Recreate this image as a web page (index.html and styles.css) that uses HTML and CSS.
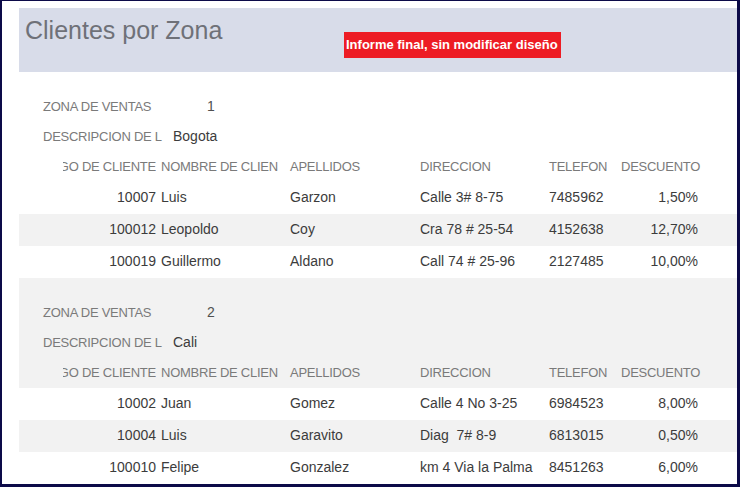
FILE: index.html
```html
<!DOCTYPE html>
<html lang="es">
<head>
    <meta charset="UTF-8">
    <meta name="viewport" content="width=device-width, initial-scale=1.0">
    <title>Clientes por Zona</title>
    <link rel="stylesheet" href="styles.css">
</head>
<body>
    <div class="frame">
        <div class="report">
            <!-- Report header -->
            <div class="report-head">
                <h1 class="report-title">Clientes por Zona</h1>
                <span class="badge">Informe final, sin modificar diseño</span>
            </div>

            <!-- Zone 1 -->
            <div class="zone">
                <div class="group-head">
                    <div class="field">
                        <span class="field-label">ZONA DE VENTAS</span>
                        <span class="field-value zone-id">1</span>
                    </div>
                    <div class="field">
                        <span class="field-label">DESCRIPCION DE L</span>
                        <span class="field-value zone-name">Bogota</span>
                    </div>
                    <div class="row row-labels">
                        <span class="cell num clip-left"><span>CODIGO DE CLIENTE</span></span>
                        <span class="cell name">NOMBRE DE CLIEN</span>
                        <span class="cell">APELLIDOS</span>
                        <span class="cell">DIRECCION</span>
                        <span class="cell">TELEFON</span>
                        <span class="cell">DESCUENTO</span>
                    </div>
                </div>
                <div class="rows">
                    <div class="row">
                        <span class="cell num">10007</span>
                        <span class="cell name">Luis</span>
                        <span class="cell">Garzon</span>
                        <span class="cell">Calle 3# 8-75</span>
                        <span class="cell">7485962</span>
                        <span class="cell num">1,50%</span>
                    </div>
                    <div class="row">
                        <span class="cell num">100012</span>
                        <span class="cell name">Leopoldo</span>
                        <span class="cell">Coy</span>
                        <span class="cell">Cra 78 # 25-54</span>
                        <span class="cell">4152638</span>
                        <span class="cell num">12,70%</span>
                    </div>
                    <div class="row">
                        <span class="cell num">100019</span>
                        <span class="cell name">Guillermo</span>
                        <span class="cell">Aldano</span>
                        <span class="cell">Call 74 # 25-96</span>
                        <span class="cell">2127485</span>
                        <span class="cell num">10,00%</span>
                    </div>
                </div>
            </div>

            <!-- Zone 2 -->
            <div class="zone zone-alt">
                <div class="group-head">
                    <div class="field">
                        <span class="field-label">ZONA DE VENTAS</span>
                        <span class="field-value zone-id">2</span>
                    </div>
                    <div class="field">
                        <span class="field-label">DESCRIPCION DE L</span>
                        <span class="field-value zone-name">Cali</span>
                    </div>
                    <div class="row row-labels">
                        <span class="cell num clip-left"><span>CODIGO DE CLIENTE</span></span>
                        <span class="cell name">NOMBRE DE CLIEN</span>
                        <span class="cell">APELLIDOS</span>
                        <span class="cell">DIRECCION</span>
                        <span class="cell">TELEFON</span>
                        <span class="cell">DESCUENTO</span>
                    </div>
                </div>
                <div class="rows">
                    <div class="row">
                        <span class="cell num">10002</span>
                        <span class="cell name">Juan</span>
                        <span class="cell">Gomez</span>
                        <span class="cell">Calle 4 No 3-25</span>
                        <span class="cell">6984523</span>
                        <span class="cell num">8,00%</span>
                    </div>
                    <div class="row">
                        <span class="cell num">10004</span>
                        <span class="cell name">Luis</span>
                        <span class="cell">Garavito</span>
                        <span class="cell">Diag &nbsp;7# 8-9</span>
                        <span class="cell">6813015</span>
                        <span class="cell num">0,50%</span>
                    </div>
                    <div class="row">
                        <span class="cell num">100010</span>
                        <span class="cell name">Felipe</span>
                        <span class="cell">Gonzalez</span>
                        <span class="cell">km 4 Via la Palma</span>
                        <span class="cell">8451263</span>
                        <span class="cell num">6,00%</span>
                    </div>
                </div>
            </div>
        </div>
    </div>
</body>
</html>
```

FILE: styles.css
```css
/* Page frame */
body {
    margin: 0;
    font-family: "Liberation Sans", Arial, sans-serif;
    background-color: #ffffff;
}

.frame {
    width: 740px;
    height: 487px;
    box-sizing: border-box;
    border-style: solid;
    border-color: #0c0a48;
    border-width: 1px 3px 3px 2px;
    overflow: hidden;
    background-color: #ffffff;
}

.report {
    padding-left: 17px;
}

/* Report header */
.report-head {
    display: grid;
    grid-template-columns: 325px auto;
    align-items: start;
    height: 64px;
    margin-top: 7px;
    background-color: #d8dce9;
}

.report-title {
    margin: 8px 0 0 6px;
    font-size: 25px;
    font-weight: normal;
    line-height: 28px;
    color: #6f7178;
}

.badge {
    justify-self: start;
    margin-top: 24px;
    padding: 0 3px 0 2px;
    height: 26px;
    line-height: 26px;
    font-size: 13px;
    font-weight: bold;
    color: #ffffff;
    background-color: #ed1c24;
}

/* Zone groups */
.zone .group-head {
    padding-top: 19px;
}

.zone-alt .group-head {
    background-color: #f2f2f2;
}

.field {
    display: flex;
    align-items: center;
    height: 30px;
    padding-left: 24px;
}

.field-label {
    width: 120px;
    white-space: nowrap;
    font-size: 13px;
    letter-spacing: -0.25px;
    color: #7a7a7a;
}

.field-value {
    font-size: 14px;
    color: #3c3c3c;
}

.zone-id {
    margin-left: 44px;
    color: #505050;
}

.zone-name {
    margin-left: 10px;
}

/* Rows */
.row {
    display: grid;
    grid-template-columns: 93px 134px 130px 129px 72px 77px;
    align-items: center;
    box-sizing: border-box;
    height: 32px;
    padding-left: 44px;
    font-size: 14px;
    color: #3c3c3c;
}

.rows .row {
    padding-bottom: 2px;
}

.row-labels {
    height: 31px;
    font-size: 13px;
    letter-spacing: -0.25px;
    color: #7a7a7a;
}

.rows .row:nth-child(even) {
    background-color: #f2f2f2;
}

.cell {
    white-space: nowrap;
}

.cell.num {
    text-align: right;
}

.cell.name {
    padding-left: 5px;
}

.clip-left {
    display: flex;
    justify-content: flex-end;
    overflow: hidden;
}
```
